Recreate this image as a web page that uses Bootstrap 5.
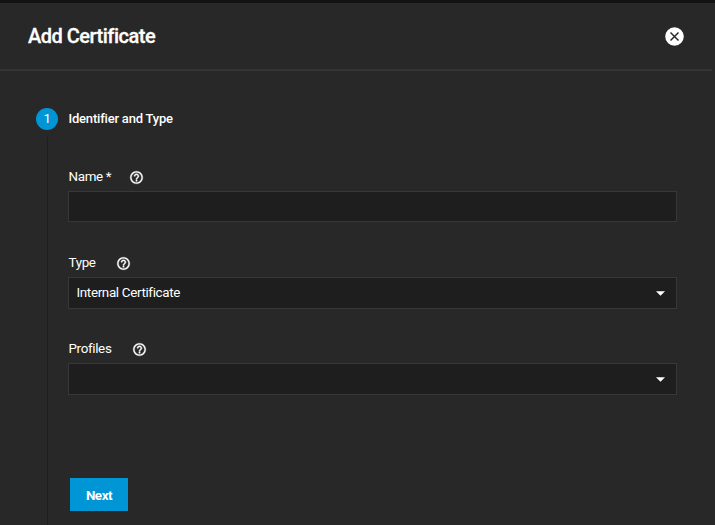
<!DOCTYPE html>
<html lang="en">
<head>
<meta charset="utf-8">
<meta name="viewport" content="width=device-width, initial-scale=1">
<title>Add Certificate</title>
<link href="https://cdn.jsdelivr.net/npm/bootstrap@5.3.0/dist/css/bootstrap.min.css" rel="stylesheet">
<style>
body{background:#282828;color:#fff;font-family:Roboto,"Liberation Sans",sans-serif;font-size:13.4px;letter-spacing:-.34px;line-height:18px;height:525px;overflow:hidden}
.panel{height:525px;border-top:3px solid #121212}
.panel-head{height:68px;padding:0 28px 0 28px;border-bottom:2px solid #353535;margin-right:3px}
.panel-title{font-size:20px;line-height:24px;font-weight:500;letter-spacing:-.5px;-webkit-text-stroke:.3px #fff}
.close-btn{width:19px;height:19px;line-height:0}
.rail{width:22px;margin-left:36px}
.step-num{width:22px;height:22px;background:#0095d5;font-size:13.4px}
.rail-line{width:1px;background:#1f1f1f;margin-top:7px}
.form-col{margin-left:10px;width:609px}
.step-title{height:22px;line-height:21px;font-weight:500;font-size:13px;letter-spacing:-.2px;padding-left:.5px;margin-bottom:38px}
.field-label{height:18px;margin-bottom:5px;padding-left:.5px}
.help-icon{width:15px;height:15px;margin-left:20.5px}
.help-wide{margin-left:17.3px}
.field-box{height:32px;background:#1e1e1e;border:1px solid #383838;border-radius:0;color:#fff;font-size:13.4px;padding:0 11px 0 7.5px}
.field-box:focus{background:#1e1e1e;color:#fff;box-shadow:none;border-color:#0095d5}
input.field-box{height:31px}
.field-group{height:86px}
.next-btn{width:58px;height:33px;background:#0095d5;color:#fff;border:0;border-radius:0;font-size:13.4px;font-weight:700;letter-spacing:-.45px;padding:3px 0 0;margin:52px 0 0 2px}
</style>
<script src="https://cdn.jsdelivr.net/npm/bootstrap@5.3.0/dist/js/bootstrap.bundle.min.js"></script>
</head>
<body>
<svg class="d-none">
<symbol id="help" viewBox="0 0 24 24"><path fill="currentColor" stroke="currentColor" stroke-width=".6" d="M11 18h2v-2h-2v2zm1-16C6.480 2 2 6.480 2 12s4.480 10 10 10 10-4.480 10-10S17.520 2 12 2zm0 18c-4.410 0-8-3.590-8-8s3.590-8 8-8 8 3.590 8 8-3.590 8-8 8zm0-14c-2.210 0-4 1.790-4 4h2c0-1.100.9-2 2-2s2 .9 2 2c0 2-3 1.750-3 5h2c0-2.250 3-2.500 3-5 0-2.210-1.790-4-4-4z"/></symbol>
<symbol id="caret" viewBox="0 0 10 5"><path fill="currentColor" d="M0 0h10L5 5z"/></symbol>
</svg>
<main class="panel d-flex flex-column">
  <header class="panel-head d-flex align-items-center justify-content-between">
    <h1 class="panel-title mb-0">Add Certificate</h1>
    <button type="button" class="close-btn btn p-0 border-0" aria-label="Close">
      <svg width="19" height="19" viewBox="0 0 19 19"><circle cx="9.500" cy="9.500" r="9.300" fill="#fff"/><path d="M5.500 5.500l8 8M13.500 5.500l-8 8" stroke="#282828" stroke-width="1.500"/></svg>
    </button>
  </header>
  <section class="d-flex flex-grow-1" style="padding-top:37px">
    <div class="rail d-flex flex-column align-items-center">
      <span class="step-num rounded-circle d-flex align-items-center justify-content-center flex-shrink-0">1</span>
      <span class="rail-line flex-grow-1"></span>
    </div>
    <form class="form-col">
      <div class="step-title">Identifier and Type</div>
      <div class="field-group">
        <label class="field-label d-flex align-items-center" for="name">Name *<svg class="help-icon help-wide"><use href="#help"/></svg></label>
        <input id="name" class="field-box form-control" type="text">
      </div>
      <div class="field-group">
        <div class="field-label d-flex align-items-center">Type<svg class="help-icon"><use href="#help"/></svg></div>
        <div class="field-box d-flex align-items-center justify-content-between" role="combobox" aria-label="Type"><span>Internal Certificate</span><svg width="9" height="5"><use href="#caret"/></svg></div>
      </div>
      <div class="field-group">
        <div class="field-label d-flex align-items-center">Profiles<svg class="help-icon"><use href="#help"/></svg></div>
        <div class="field-box d-flex align-items-center justify-content-end" role="combobox" aria-label="Profiles"><svg width="9" height="5"><use href="#caret"/></svg></div>
      </div>
      <button type="button" class="next-btn btn d-block">Next</button>
    </form>
  </section>
</main>
</body>
</html>
